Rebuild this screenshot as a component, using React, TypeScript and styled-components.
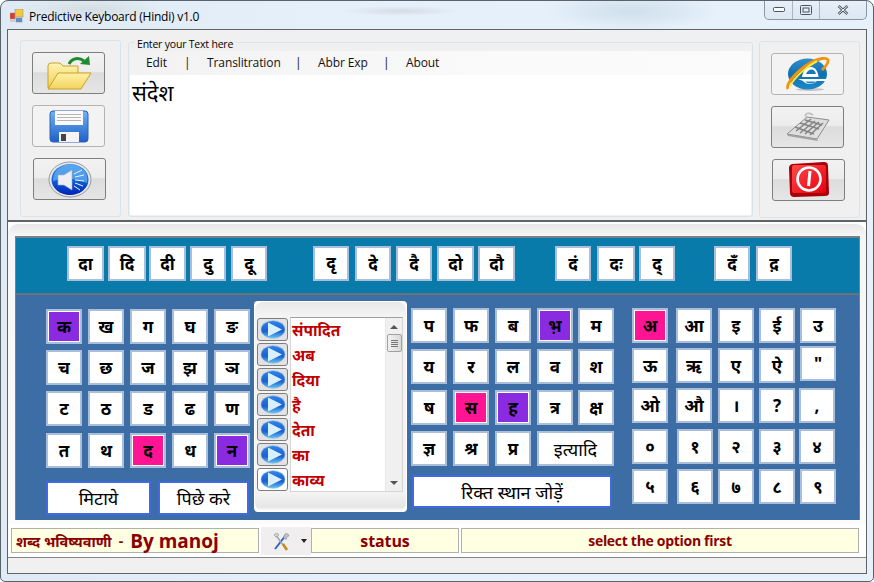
import React from "react";
import styled, { createGlobalStyle } from "styled-components";

const UI = `"Open Sans", "Noto Sans", "Noto Sans Devanagari", "Lohit Devanagari", sans-serif`;
const HI = `"Noto Sans", "Noto Sans Devanagari", "Lohit Devanagari", "FreeSans", sans-serif`;

const Global = createGlobalStyle`
  html, body { margin: 0; padding: 0; background: #fff; }
  * { box-sizing: border-box; }
`;

const Win = styled.div`
  width: 874px; height: 582px; overflow: hidden;
  display: flex; flex-direction: column;
  border: 1px solid #59636c; border-radius: 8px 8px 5px 5px;
  padding: 0 6px 7px 6px;
  background:
    radial-gradient(ellipse 70px 12px at 90px 8px, #d4dde2 0%, transparent 100%),
    radial-gradient(ellipse 60px 5px at 400px 10px, #d3dce5 0%, transparent 100%),
    radial-gradient(ellipse 90px 20px at 630px 10px, #cfdfec 0%, transparent 100%),
    linear-gradient(90deg, #dfeaf4, #e6f0fa 40%, #e6f1fb 100%);
`;
const TitleBar = styled.div`
  height: 28px; flex: none; display: flex; align-items: flex-start;
`;
const AppIcon = styled.svg`
  width: 14px; height: 14px; margin: 8px 0 0 3px; flex: none;
`;
const Title = styled.div`
  font: 12px ${UI}; color: #000; margin: 7px 0 0 5px; letter-spacing: -0.23px; white-space: nowrap;
`;
const Caption = styled.div`
  margin-left: auto; margin-top: -1px; height: 20px; width: 103px; display: flex;
  border: 1px solid #8a98a6; border-top: none; border-radius: 0 0 5px 5px;
  background: linear-gradient(#e8f0f8, #dce7f2);
`;
const CapBtn = styled.div<{ $w: number }>`
  width: ${p => p.$w}px; display: flex; align-items: center; justify-content: center;
  border-right: 1px solid #a8b5c2;
  &:last-child { border-right: none; }
`;
const Client = styled.div`
  flex: 1; min-height: 0; display: flex; flex-direction: column;
  border: 1px solid #5f6468; background: #f0f0f0;
`;
const TopPane = styled.div`
  height: 192px; flex: none; display: flex; background: #f0f0f0;
  padding: 10px 5px 3px 12px; border-bottom: 2px solid #5f6468;
`;
const Dock = styled.div<{ $mt?: number }>`
  width: 101px; height: 177px; flex: none; border: 1px solid #dbe3ea; border-radius: 3px;
  margin-top: ${p => p.$mt ?? 0}px;
  display: flex; flex-direction: column; gap: 11px; padding: 11px 11px 0 11px;
`;
const ToolBtn = styled.div<{ $flat?: boolean; $shift?: number }>`
  width: 73px; height: 42px; display: flex; align-items: center; justify-content: center;
  margin-left: ${p => p.$shift ?? 0}px;
  border: 1px solid ${p => (p.$flat ? "#b4b4b4" : "#7e7e7e")}; border-radius: 3px;
  background: ${p => p.$flat ? "#f3f3f3" : "linear-gradient(#f2f2f2 0, #ececec 48%, #dcdcdc 49%, #e6e6e6 100%)"};
`;
const Group = styled.div`
  width: 625px; height: 175px; margin: 2px 6px 0 7px; flex: none; position: relative;
  border: 1px solid #dbe3ea; border-radius: 3px; padding: 8px 1px 1px 1px;
  display: flex; flex-direction: column; background: #f0f0f0;
`;
const Legend = styled.div`
  position: absolute; left: 5px; top: -5px; padding: 0 3px; background: #f0f0f0;
  font: 10.5px ${UI}; color: #000; line-height: 13px; letter-spacing: -0.2px;
`;
const MenuStrip = styled.div`
  height: 24px; flex: none; display: flex; align-items: center; padding: 0 0 2px 16px;
  background: linear-gradient(90deg, #f2f2f2, #fafafa 60%, #fbfbfb);
  font: 12px ${UI}; color: #111; letter-spacing: -0.1px;
`;
const MenuItem = styled.span<{ $w: number }>`
  width: ${p => p.$w}px; flex: none; white-space: nowrap;
`;
const Editor = styled.div`
  flex: 1; background: #fff; padding: 2px 0 0 2px; font: 22px ${HI}; color: #000; line-height: 30px;
`;
const Main = styled.div`
  height: 304px; flex: none; background: #fff; padding: 2px 0 0 0;
`;
const MainInner = styled.div`
  height: 300px; border-radius: 10px 10px 0 0; padding: 12px 6px 0 7px;
  background: linear-gradient(#e7e7e9, #f6f6f6 12px, #fbfbfb 100%);
`;
const Board = styled.div`
  height: 284px; border: 1px solid #7a8087; border-bottom: none; border-top-width: 2px; background: #3c6ea5;
  display: flex; flex-direction: column;
`;
const Strip = styled.div`
  height: 57px; flex: none; background: #087bab; border-bottom: 2px solid #6a737c;
  display: flex; padding: 8px 0 0 51px;
`;
const StripGroup = styled.div<{ $cols: string; $gap: number }>`
  display: grid; grid-template-columns: ${p => p.$cols}; margin-left: ${p => p.$gap}px; height: 35px;
`;
const Key = styled.div<{ $w?: number; $c?: string; $dy?: number; $dx?: number; $plain?: boolean }>`
  width: ${p => p.$w ?? 36}px; height: 35px; display: flex; align-items: center; justify-content: center;
  margin-top: ${p => p.$dy ?? 0}px; margin-left: ${p => p.$dx ?? 0}px;
  background: ${p => p.$c ?? "#fff"};
  border: 2px solid #a9bedb;
  box-shadow: inset 1px 1px 0 #fff;
  ${p => p.$c ? `outline: 1px solid #fff; outline-offset: -3px;` : ""}
  ${p => p.$plain ? "grid-column: 4 / span 2;" : ""}
  font: ${p => (p.$plain ? "400 18px" : "700 17px")}/1 ${HI}; color: #000; white-space: nowrap;
`;
const Lower = styled.div`
  flex: 1; display: flex; padding: 6px 0 0 30px; align-items: flex-start;
`;
const Column = styled.div<{ $ml?: number; $mt?: number; $w: number }>`
  width: ${p => p.$w}px; flex: none; margin-left: ${p => p.$ml ?? 0}px; margin-top: ${p => p.$mt ?? 0}px;
`;
const KeyGrid = styled.div<{ $cols: string; $rows: string }>`
  display: grid; grid-template-columns: ${p => p.$cols}; grid-template-rows: ${p => p.$rows};
`;
const ActionRow = styled.div`
  display: flex; gap: 7px; margin-top: 3px;
`;
const Action = styled.div<{ $w: number; $h?: number; $ml?: number; $mt?: number }>`
  width: ${p => p.$w}px; height: ${p => p.$h ?? 34}px; background: #fff; border: 2px solid #4169e1;
  display: flex; align-items: center; justify-content: center;
  margin-left: ${p => p.$ml ?? 0}px; margin-top: ${p => p.$mt ?? 0}px;
  font: 400 18px/1 ${HI}; color: #000; white-space: nowrap;
`;
const WordPanel = styled.div`
  width: 153px; height: 211px; flex: none; margin-left: 4px; background: #fff; border-radius: 4px;
  padding: 1px;
`;
const WordInner = styled.div`
  height: 209px; border-radius: 8px;
  background: linear-gradient(#e9e9e9, #f4f4f4 14px, #f4f4f4 190px, #e6e6e6 205px, #fff 100%);
  padding: 15px 3px 0 2px; display: flex;
`;
const PlayCol = styled.div`
  width: 31px; flex: none; display: flex; flex-direction: column; padding-top: 1px;
`;
const PlayBtn = styled.div<{ $last?: boolean }>`
  width: 31px; height: 23px; margin-bottom: 2px; border: 1px solid #7d7d7d; border-radius: 3px;
  background: ${p => (p.$last ? "#fff" : "#e2e2e2")}; display: flex; align-items: center; justify-content: center;
`;
const WordBox = styled.div`
  width: 113px; height: 175px; margin-left: 2px; background: #fff; display: flex;
  border: 1px solid #d6d6d6; border-top-color: #a0a0a0;
`;
const Words = styled.div`
  flex: 1; padding: 0 0 0 1px;
`;
const Word = styled.div`
  height: 25px; font: 700 15.5px/25px ${HI}; color: #c00000; white-space: nowrap;
`;
const ScrollBar = styled.div`
  width: 17px; flex: none; background: #f0f0f0; display: flex; flex-direction: column; align-items: center;
  border-left: 1px solid #e8e8e8;
`;
const Arrow = styled.div<{ $down?: boolean }>`
  width: 0; height: 0; margin: ${p => (p.$down ? "auto 0 6px" : "7px 0 0")};
  border-left: 4px solid transparent; border-right: 4px solid transparent;
  ${p => p.$down ? "border-top: 4px solid #555;" : "border-bottom: 4px solid #555;"}
`;
const Thumb = styled.div`
  width: 15px; height: 18px; margin-top: 5px; border: 1px solid #a0a0a0; border-radius: 2px;
  background: linear-gradient(90deg, #f2f2f2, #d9d9d9);
  display: flex; flex-direction: column; gap: 1px; align-items: center; justify-content: center;
  & > i { display: block; width: 7px; height: 1px; background: #777; }
`;
const Status = styled.div`
  height: 32px; flex: none; background: #fff; display: flex; padding: 2px 0 0 3px;
  border-bottom: 1px solid #7f8488; align-items: flex-start;
`;
const Cell = styled.div<{ $w: number; $big?: boolean; $size?: number }>`
  width: ${p => p.$w}px; height: 25px; flex: none; background: #ffffe1; border: 1px solid #b0b0b0;
  display: flex; align-items: center; justify-content: ${p => (p.$big ? "flex-start" : "center")};
  padding-left: ${p => (p.$big ? 4 : 0)}px; color: #8b0000; white-space: nowrap;
  font: 700 ${p => p.$size ?? 14}px ${UI}; letter-spacing: ${p => (p.$size ? -0.1 : -0.3)}px;
  margin-right: ${p => (p.$big ? 0 : 2)}px;
`;
const CellHi = styled.span`
  font: 700 14.5px ${HI}; letter-spacing: 0;
`;
const CellDash = styled.span`
  font: 700 14px ${UI}; letter-spacing: 0; margin: 0 7px;
`;
const CellEn = styled.span`
  font: 700 19px "Open Sans", sans-serif; letter-spacing: 0;
`;
const DropDown = styled.div`
  width: 50px; height: 28px; flex: none; margin: -1px 0 0 2px; background: #f0eeee;
  display: flex; align-items: center; padding-left: 11px; gap: 10px;
`;
const DropArrow = styled.div`
  width: 0; height: 0; border-left: 3px solid transparent; border-right: 3px solid transparent;
  border-top: 4px solid #222;
`;
const Foot = styled.div`
  flex: 1; background: #f0f0f0;
`;

const FolderIcon = () => (
  <svg width="46" height="36" viewBox="0 0 46 36">
    <defs>
      <linearGradient id="fb" x1="0" y1="0" x2="0" y2="1"><stop offset="0" stopColor="#fff3b0" /><stop offset="1" stopColor="#f0cf5c" /></linearGradient>
      <linearGradient id="ff" x1="0" y1="0" x2="0" y2="1"><stop offset="0" stopColor="#fff2a6" /><stop offset="1" stopColor="#f4d35e" /></linearGradient>
    </defs>
    <path d="M2 33V11q0-3 3-3h9l3 3h15v8H12L4 33z" fill="url(#fb)" stroke="#c9a227" />
    <path d="M2 34 12 18h33L35 34z" fill="url(#ff)" stroke="#c9a227" />
    <path d="M23 9C26 3 33 2 38 6" fill="none" stroke="#1f8a2e" strokeWidth="3" />
    <path d="M34 9 44 10 43 1z" fill="#1f8a2e" />
  </svg>
);
const SaveIcon = () => (
  <svg width="40" height="33" viewBox="0 0 40 33">
    <defs><linearGradient id="sv" x1="0" y1="0" x2="0" y2="1"><stop offset="0" stopColor="#6fb2f5" /><stop offset="1" stopColor="#1f5fc8" /></linearGradient></defs>
    <rect x="1" y="1" width="38" height="31" rx="3" fill="url(#sv)" stroke="#2a62b8" />
    <rect x="6" y="1" width="28" height="14" fill="#fafafa" />
    <path d="M8 4.500h24M8 7.500h24M8 10.500h24" stroke="#b5b5b5" />
    <rect x="10" y="22" width="20" height="10" fill="#f4f4f4" />
    <rect x="12" y="24" width="5" height="7" fill="#444" />
  </svg>
);
const SpeakerIcon = () => (
  <svg width="44" height="37" viewBox="0 0 44 37">
    <defs>
      <linearGradient id="sp" x1="0" y1="0" x2="0" y2="1"><stop offset="0" stopColor="#3f95e6" /><stop offset="0.55" stopColor="#0f5ed4" /><stop offset="1" stopColor="#0022b8" /></linearGradient>
    </defs>
    <ellipse cx="22" cy="18.500" rx="21" ry="17.500" fill="#e6e6e6" stroke="#9a9a9a" />
    <ellipse cx="22" cy="18.500" rx="18.500" ry="15.500" fill="url(#sp)" />
    <path d="M5 20 Q20 14 39 22 Q41 12 33 7 Q20 -1 9 9 Q5 13 5 20z" fill="#62aef0" opacity=".75" />
    <path d="M10 14h6l8-5v20l-8-5h-6z" fill="#eeeef2" stroke="#aab0bc" strokeWidth=".6" />
    <path d="M26 13 34 9M27 16 36 14M27 19 36 20M27 22 35 25M26 25 32 29" stroke="#eef4ff" strokeWidth="1" />
  </svg>
);
const IEIcon = () => (
  <svg width="44" height="36" viewBox="0 0 44 36">
    <defs><linearGradient id="ie" x1="0" y1="0" x2="0" y2="1"><stop offset="0" stopColor="#2f8fce" /><stop offset=".5" stopColor="#0f6fb0" /><stop offset="1" stopColor="#1c88cc" /></linearGradient></defs>
    <ellipse cx="24" cy="33.500" rx="14" ry="1.500" fill="#c4c4c4" />
    <ellipse cx="21.500" cy="18" rx="19.500" ry="15.500" fill="url(#ie)" />
    <path d="M16 21C17 14 21 11 25 11c4 0 7 4 7.500 10z" fill="#fff" />
    <path d="M20 18C21 15 23.500 13.500 25.500 13.500c2 0 4 2 4.500 4.500z" fill="#167ab8" />
    <path d="M12 23H41L40 25H31C27 29 20 29 17 25z" fill="#fff" />
    <path d="M19 25.500C22 28 27 28 30 25.500z" fill="#1c86c8" />
    <path d="M2 33C-1 28 12 14 24 7 33 2 41 1 42 4c1 3-3 7-6 10" fill="none" stroke="#f09410" strokeWidth="2.800" />
    <path d="M4 30C9 21 20 11 31 5" fill="none" stroke="#ffe83a" strokeWidth="2" />
  </svg>
);
const KeyboardIcon = () => (
  <svg width="44" height="30" viewBox="0 0 44 30">
    <path d="M1 22 21 5 43 8 31 27z" fill="#dedede" stroke="#8e8e8e" />
    <path d="M1 22 31 27 32 29 2 24z" fill="#a0a0a0" />
    <path d="M10 19 25 7M14 21 29 9M19 22 33 10M24 23 37 11" stroke="#858585" strokeWidth="1.600" />
    <path d="M9 15 28 22M14 11 33 17M19 8 36 13" stroke="#858585" strokeWidth="1.600" />
    <path d="M20 5C18 1 23 0 27 3" fill="none" stroke="#c4c4c4" strokeWidth="2" />
  </svg>
);
const PowerIcon = () => (
  <svg width="42" height="36" viewBox="0 0 42 36">
    <defs><linearGradient id="pw" x1="0" y1="0" x2="1" y2="1"><stop offset="0" stopColor="#ff4a4a" /><stop offset="1" stopColor="#e60010" /></linearGradient></defs>
    <path d="M4 2 36 0q4 0 4 4l1 27q0 3-4 3L6 35q-3 0-4-3L1 6q0-3 3-4z" fill="#a80008" />
    <rect x="4" y="3" width="34" height="28" rx="2" fill="url(#pw)" />
    <circle cx="21" cy="17" r="11.500" fill="none" stroke="#fff" strokeWidth="2.600" />
    <path d="M22 9 20.500 24" stroke="#fff" strokeWidth="3" />
  </svg>
);
const PlayIcon = () => (
  <svg width="26" height="19" viewBox="0 0 26 19">
    <defs><linearGradient id="pl" x1="0" y1="0" x2="0" y2="1"><stop offset="0" stopColor="#2f86ea" /><stop offset=".6" stopColor="#1a5fd0" /><stop offset="1" stopColor="#66c8f4" /></linearGradient></defs>
    <ellipse cx="13" cy="9.500" rx="12" ry="8.800" fill="url(#pl)" stroke="#8db8e8" strokeWidth=".6" />
    <path d="M8 2.500 22 9.500 8 16.500z" fill="#d8f0fc" />
  </svg>
);
const ToolsIcon = () => (
  <svg width="19" height="19" viewBox="0 0 19 19">
    <path d="M3 17 14 3" stroke="#2b66b8" strokeWidth="2" />
    <path d="M13 2c2-1 4 0 4 2l-2 1-1 1 1 1c-2 1-4-1-3-3z" fill="#b8c2cc" stroke="#7d8790" strokeWidth=".5" />
    <path d="M3 2 14 17" stroke="#9aa4ae" strokeWidth="1.500" />
    <path d="M11 12 15 18" stroke="#c88a20" strokeWidth="2.500" />
    <path d="M2 3 5 1 7 3 4 5z" fill="#cfd5db" stroke="#7d8790" strokeWidth=".5" />
  </svg>
);

type K = { t: string; w?: number; c?: string; dy?: number; dx?: number };
const P = "#8a2be2";
const R = "#ff1493";
const mk = (s: string): K[] => s.split(" ").map(t => ({ t }));

const stripGroups: { cols: string; gap: number; keys: K[] }[] = [
  { cols: "41px 41px 41px 41px 36px", gap: 0, keys: [{ t: "दा", w: 37 }, { t: "दि", w: 38 }, { t: "दी", w: 37 }, { t: "दु" }, { t: "दू" }] },
  { cols: "42px 41px 41px 41px 37px", gap: 46, keys: [{ t: "दृ" }, { t: "दे" }, { t: "दै" }, { t: "दो", w: 37 }, { t: "दौ", w: 37 }] },
  { cols: "42px 42px 36px", gap: 40, keys: [{ t: "दं" }, { t: "दः", w: 38 }, { t: "द्" }] },
  { cols: "42px 36px", gap: 39, keys: [{ t: "दँ" }, { t: "द़" }] },
];

const left: K[] = [
  { t: "क", c: P }, ...mk("ख ग घ ङ च छ ज झ ञ ट ठ ड ढ ण त थ"), { t: "द", c: R }, { t: "ध" }, { t: "न", c: P },
];
const mid: K[] = [
  ...mk("प फ ब"), { t: "भ़", c: P }, ...mk("म य र ल व श ष"), { t: "स", c: R }, { t: "ह", c: P }, ...mk("त्र क्ष ज्ञ श्र प्र"),
];
const right: K[] = [
  { t: "अ", c: R }, ...mk("आ इ ई उ ऊ ऋ ए ऐ"), { t: '"', dy: -2 },
  ...mk("ओ औ । ?"), { t: ",", dx: -1 },
  { t: "०" }, { t: "१", dx: 1 }, ...mk("२ ३"), { t: "४", dx: -1 },
  { t: "५" }, { t: "६", dx: 1 }, ...mk("७ ८ ९"),
];
const words = ["संपादित", "अब", "दिया", "है", "देता", "का", "काव्य"];

const renderKey = (k: K, i: number) => (
  <Key key={i} $w={k.w} $c={k.c} $dy={k.dy} $dx={k.dx}>{k.t}</Key>
);

export default function App() {
  return (
    <>
      <Global />
      <Win>
        <TitleBar>
          <AppIcon viewBox="0 0 14 14">
            <rect x="0" y="4" width="5" height="6" fill="#e03a2a" stroke="#888" strokeWidth=".5" />
            <rect x="5" y="0" width="8" height="8" fill="#f5c842" stroke="#888" strokeWidth=".5" />
            <rect x="6" y="9" width="6" height="4" fill="#5a8fd8" stroke="#888" strokeWidth=".5" />
            <rect x="0" y="11" width="5" height="2" fill="#ccc" />
          </AppIcon>
          <Title>Predictive Keyboard (Hindi) v1.0</Title>
          <Caption>
            <CapBtn $w={28}>
              <svg width="12" height="6" viewBox="0 0 12 6"><rect x=".5" y=".5" width="11" height="4" rx="1" fill="#f8fbff" stroke="#4a5560" /></svg>
            </CapBtn>
            <CapBtn $w={27}>
              <svg width="12" height="10" viewBox="0 0 12 10"><rect x=".5" y=".5" width="11" height="9" rx="1" fill="#e4eef8" stroke="#4a5560" /><rect x="3" y="3" width="6" height="4" fill="none" stroke="#4a5560" /></svg>
            </CapBtn>
            <CapBtn $w={46}>
              <svg width="12" height="10" viewBox="0 0 12 10"><path d="M1.500 1 10.500 9M10.500 1 1.500 9" stroke="#4a5560" strokeWidth="2.600" /><path d="M1.500 1 10.500 9M10.500 1 1.500 9" stroke="#f4f8fc" strokeWidth="1" /></svg>
            </CapBtn>
          </Caption>
        </TitleBar>
        <Client>
          <TopPane>
            <Dock>
              <ToolBtn><FolderIcon /></ToolBtn>
              <ToolBtn $flat><SaveIcon /></ToolBtn>
              <ToolBtn $shift={1}><SpeakerIcon /></ToolBtn>
            </Dock>
            <Group>
              <Legend>Enter your Text here</Legend>
              <MenuStrip>
                <MenuItem $w={38}>Edit</MenuItem>
                <MenuItem $w={23}>|</MenuItem>
                <MenuItem $w={88}>Translitration</MenuItem>
                <MenuItem $w={23}>|</MenuItem>
                <MenuItem $w={65}>Abbr Exp</MenuItem>
                <MenuItem $w={23}>|</MenuItem>
                <MenuItem $w={50}>About</MenuItem>
              </MenuStrip>
              <Editor>संदेश</Editor>
            </Group>
            <Dock $mt={1}>
              <ToolBtn $flat><IEIcon /></ToolBtn>
              <ToolBtn><KeyboardIcon /></ToolBtn>
              <ToolBtn $shift={1}><PowerIcon /></ToolBtn>
            </Dock>
          </TopPane>
          <Main>
            <MainInner>
              <Board>
                <Strip>
                  {stripGroups.map((g, i) => (
                    <StripGroup key={i} $cols={g.cols} $gap={g.gap}>{g.keys.map(renderKey)}</StripGroup>
                  ))}
                </Strip>
                <Lower>
                  <Column $w={204} $mt={8}>
                    <KeyGrid $cols="42px 42px 42px 42px 36px" $rows="41px 41px 42px 45px">
                      {left.map(renderKey)}
                    </KeyGrid>
                    <ActionRow>
                      <Action $w={105}>मिटाये</Action>
                      <Action $w={91}>पिछे करे</Action>
                    </ActionRow>
                  </Column>
                  <WordPanel>
                    <WordInner>
                      <PlayCol>
                        {words.map((w, i) => <PlayBtn key={i} $last={i === 6}><PlayIcon /></PlayBtn>)}
                      </PlayCol>
                      <WordBox>
                        <Words>{words.map((w, i) => <Word key={i}>{w}</Word>)}</Words>
                        <ScrollBar>
                          <Arrow />
                          <Thumb><i /><i /><i /><i /></Thumb>
                          <Arrow $down />
                        </ScrollBar>
                      </WordBox>
                    </WordInner>
                  </WordPanel>
                  <Column $w={203} $ml={4} $mt={7}>
                    <KeyGrid $cols="42px 42px 42px 41px 36px" $rows="41px 41px 41px 41px">
                      {mid.map(renderKey)}
                      <Key $w={77} $plain>इत्यादि</Key>
                    </KeyGrid>
                    <Action $w={200} $h={33} $ml={1} $mt={3}>रिक्त स्थान जोड़ें</Action>
                  </Column>
                  <Column $w={205} $ml={18} $mt={7}>
                    <KeyGrid $cols="44px 42px 41px 41px 36px" $rows="40px 40px 41px 40px 35px">
                      {right.map(renderKey)}
                    </KeyGrid>
                  </Column>
                </Lower>
              </Board>
            </MainInner>
          </Main>
          <Status>
            <Cell $w={248} $big><CellHi>शब्द भविष्यवाणी</CellHi><CellDash>-</CellDash><CellEn>By manoj</CellEn></Cell>
            <DropDown><ToolsIcon /><DropArrow /></DropDown>
            <Cell $w={148} $size={16}>status</Cell>
            <Cell $w={398}>select the option first</Cell>
          </Status>
          <Foot />
        </Client>
      </Win>
    </>
  );
}
